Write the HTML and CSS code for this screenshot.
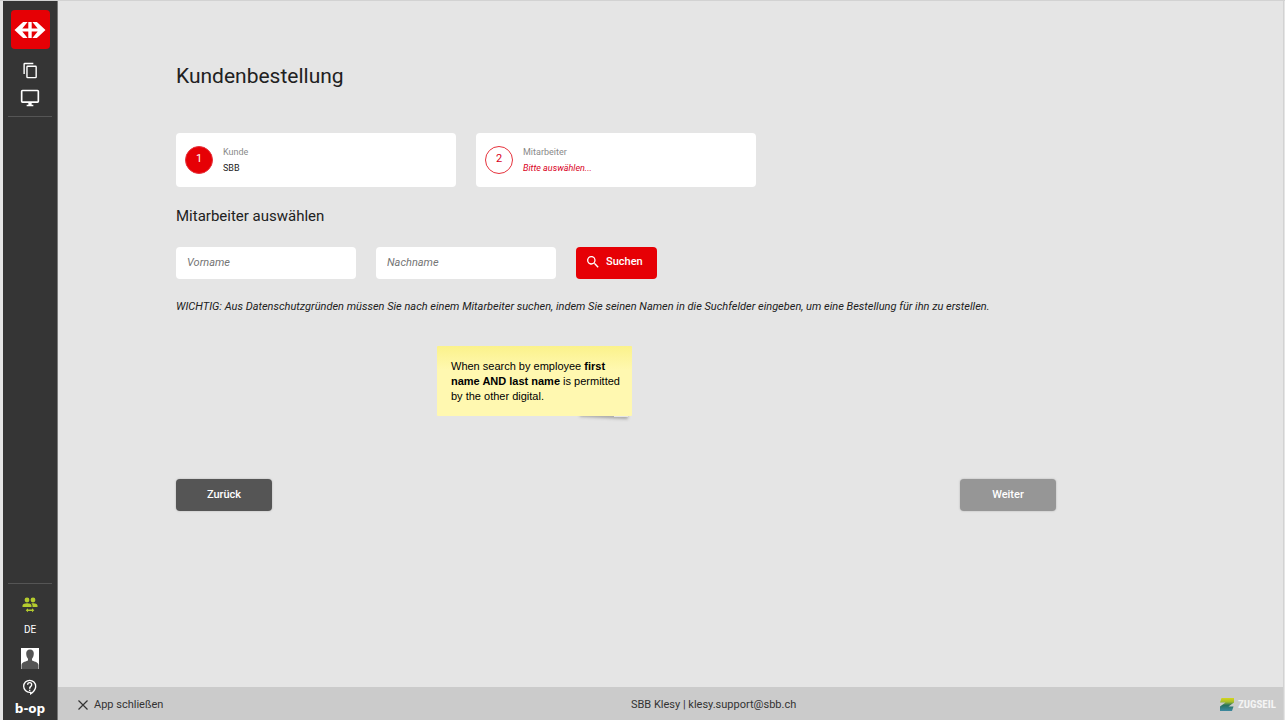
FILE: index.html
```html
<!DOCTYPE html>
<html lang="de">
<head>
<meta charset="utf-8">
<meta name="viewport" content="width=device-width, initial-scale=1">
<title>Kundenbestellung</title>
<link rel="stylesheet" href="styles.css">
</head>
<body>
<div class="app">
  <nav class="sidebar" aria-label="Navigation">
    <div class="side-group side-top">
      <a class="brand" href="#" aria-label="SBB">
        <svg width="32" height="16" viewBox="0 0 32 17" preserveAspectRatio="none" fill="#fff"><path d="M14.300 0h3.400v6.800h6L18.400 0h4.500L31.500 8.500l-8.600 8.500h-4.500l5.300-6.800h-6V17h-3.400v-6.800h-6L13.600 17H9.100L.5 8.500 9.100 0h4.500L8.300 6.800h6z"/></svg>
      </a>
      <button class="side-btn" type="button" aria-label="Kopien">
        <svg width="17" height="17" viewBox="0 0 24 24" fill="#fff"><path d="M16 1H4a2 2 0 0 0-2 2v14h2V3h12V1zm3 4H8a2 2 0 0 0-2 2v14a2 2 0 0 0 2 2h11a2 2 0 0 0 2-2V7a2 2 0 0 0-2-2zm0 16H8V7h11v14z"/></svg>
      </button>
      <button class="side-btn" type="button" aria-label="Bildschirm">
        <svg width="20" height="20" viewBox="0 0 24 24" fill="#fff"><path d="M21 2H3a2 2 0 0 0-2 2v12a2 2 0 0 0 2 2h7v2H8v2h8v-2h-2v-2h7a2 2 0 0 0 2-2V4a2 2 0 0 0-2-2zm0 14H3V4h18v12z"/></svg>
      </button>
    </div>
    <div class="side-group side-bottom">
      <button class="side-btn" type="button" aria-label="Benutzer wechseln">
        <svg width="16" height="16" viewBox="0 0 16 16" fill="#b5cc2e"><circle cx="5" cy="3" r="2.400"/><circle cx="11" cy="3" r="2.400"/><path d="M.5 10V8.600C.5 7 3.300 6.300 5 6.300s4.500.7 4.500 2.300V10zM10.500 10V8.600c0-1-.5-1.700-1.200-2.200.6-.1 1.200-.1 1.700-.1 1.700 0 4.500.7 4.500 2.300V10zM6 11.300v1.300h4v-1.300l2.300 2-2.300 2V14H6v1.300l-2.300-2z"/></svg>
      </button>
      <button class="side-btn lang" type="button">DE</button>
      <button class="side-btn avatar" type="button" aria-label="Profil">
        <svg width="18" height="21" viewBox="0 0 18 21"><path fill="#fff" d="M0 0h18v21H0z"/><path fill="#555" d="M9 1.500c2.600 0 3.900 1.800 3.800 4.200-.1 2.200-.8 4-1.800 5v1.600c.8 1.200 6.200 1.400 6.500 4.700V21H.5v-4c.3-3.300 5.700-3.500 6.500-4.700v-1.600c-1-1-1.700-2.800-1.800-5C5.100 3.300 6.400 1.500 9 1.500z"/></svg>
      </button>
      <button class="side-btn help" type="button" aria-label="Hilfe">
        <svg width="16" height="16" viewBox="0 0 24 24" fill="#fff"><path d="M11.500 1a10 10 0 0 0 0 20h.5v3c4.900-2.300 9.500-7 9.500-13A10 10 0 0 0 11.500 1zm2.500 19.300V19h-2.500a8 8 0 1 1 8-8c0 3.500-2.200 6.900-5.500 9.300zM10.500 16h2v2h-2zm1-11.500a4 4 0 0 0-4 4h2a2 2 0 0 1 4 0c0 2-3 1.800-3 6h2c0-2.700 3-3 3-6a4 4 0 0 0-4-4z"/></svg>
      </button>
      <span class="maker">b-op</span>
    </div>
  </nav>

  <div class="page">
    <main class="content">
      <h1 class="title">Kundenbestellung</h1>
      <ol class="steps">
        <li class="step">
          <span class="step-no step-no-done">1</span>
          <div class="step-text"><span class="step-label">Kunde</span><span class="step-value">SBB</span></div>
        </li>
        <li class="step">
          <span class="step-no">2</span>
          <div class="step-text"><span class="step-label">Mitarbeiter</span><span class="step-value step-open">Bitte auswählen...</span></div>
        </li>
      </ol>
      <h2 class="subtitle">Mitarbeiter auswählen</h2>
      <form class="search">
        <input class="field" type="text" placeholder="Vorname" aria-label="Vorname">
        <input class="field" type="text" placeholder="Nachname" aria-label="Nachname">
        <button class="btn btn-search" type="button">
          <svg width="16" height="16" viewBox="0 0 24 24" fill="#fff"><path d="M15.500 14h-.8l-.3-.3A6.500 6.500 0 1 0 13.700 14.400l.3.300v.8l5 5 1.500-1.500zm-6 0a4.500 4.500 0 1 1 0-9 4.500 4.500 0 0 1 0 9z"/></svg>
          Suchen
        </button>
      </form>
      <p class="hint">WICHTIG: Aus Datenschutzgründen müssen Sie nach einem Mitarbeiter suchen, indem Sie seinen Namen in die Suchfelder eingeben, um eine Bestellung für ihn zu erstellen.</p>
      <aside class="note">When search by employee <b>first</b><br><b>name AND last name</b> is permitted<br>by the other digital.</aside>
      <div class="actions">
        <button class="btn btn-back" type="button">Zurück</button>
        <button class="btn btn-next" type="button" disabled>Weiter</button>
      </div>
    </main>
    <footer class="footer">
      <button class="close" type="button">
        <svg width="10" height="10" viewBox="0 0 10 10" fill="none" stroke="#333" stroke-width="1.200"><path d="M.5.5l9 9M9.500.5l-9 9"/></svg>
        App schließen
      </button>
      <span class="contact">SBB Klesy | <a class="mail" href="mailto:klesy.support@sbb.ch">klesy.support@sbb.ch</a></span>
      <span class="vendor">
        <svg width="14" height="13" viewBox="0 0 14 13"><defs><linearGradient id="z" x1="0" y1="0" x2="0" y2="1"><stop offset="0" stop-color="#d5d51c"/><stop offset=".3" stop-color="#a5bd2c"/><stop offset=".55" stop-color="#28725f"/><stop offset="1" stop-color="#3c88a0"/></linearGradient></defs><path fill="url(#z)" d="M1.500 0H14v4.500L8.500 8.500h5L12 13H0V8.500l5.500-4H0z"/></svg>
        ZUGSEIL
      </span>
    </footer>
  </div>
</div>
</body>
</html>
```
FILE: styles.css
```css
* { box-sizing: border-box; }

body {
  margin: 0;
  background: #e5e5e5;
  color: #212121;
  font: 11px/16px Roboto, sans-serif;
}

button, input { font: inherit; color: inherit; }

button {
  border: 0;
  padding: 0;
  background: none;
}

.app {
  display: flex;
  min-height: 100vh;
  padding: 0 1px 0 3px;
  border-top: 1px solid #d2d2d2;
}

.sidebar {
  flex: none;
  display: flex;
  flex-direction: column;
  justify-content: space-between;
  width: 55px;
  padding: 9px 5px 5px;
  background: #353535;
  border-right: 1px solid #777;
}

.side-group {
  display: flex;
  flex-direction: column;
  align-items: center;
}

.side-top {
  padding-bottom: 4px;
  border-bottom: 1px solid #555;
}

.side-bottom {
  padding-top: 11px;
  border-top: 1px solid #555;
}

.side-btn {
  display: flex;
  align-items: center;
  justify-content: center;
  width: 32px;
  min-height: 20px;
}

.side-top .side-btn { height: 28px; }

.brand {
  display: flex;
  align-items: center;
  justify-content: center;
  width: 39px;
  height: 39px;
  margin-bottom: 7px;
  border-radius: 4px;
  background: #e60005;
}

.lang {
  height: 30px;
  color: #fff;
  font-size: 10px;
}

.avatar { height: 26px; }

.help { height: 32px; }

.maker {
  color: #fff;
  font: bold 12px/12px "DejaVu Sans", sans-serif;
}

.page {
  flex: 1;
  min-width: 0;
  display: flex;
  flex-direction: column;
  border-right: 1px solid #d2d2d2;
}

.content {
  flex: 1;
  width: 100%;
  max-width: 1116px;
  padding: 61px 118px 32px;
}

.title {
  margin: 0;
  font-size: 21px;
  line-height: 28px;
  font-weight: 400;
}

.steps {
  display: flex;
  gap: 20px;
  margin: 43px 0 0;
  padding: 0;
  list-style: none;
}

.step {
  display: flex;
  align-items: center;
  gap: 10px;
  flex: 0 1 280px;
  padding: 11px 9px;
  border-radius: 4px;
  background: #fff;
}

.step-no {
  flex: none;
  width: 28px;
  height: 28px;
  border: 1px solid #e6323c;
  border-radius: 50%;
  color: #d9001b;
  line-height: 24px;
  text-align: center;
}

.step-no-done {
  background: #e60005;
  color: #fff;
}

.step-text {
  display: flex;
  flex-direction: column;
  font-size: 9px;
}

.step-label { color: #8a8a8a; }

.step-open {
  color: #d9001b;
  font-style: italic;
}

.subtitle {
  margin: 19px 0 21px;
  font-size: 15px;
  line-height: 20px;
  font-weight: 400;
}

.search {
  display: flex;
  gap: 20px;
}

.field {
  flex: 0 1 180px;
  min-width: 0;
  height: 32px;
  padding: 0 11px 2px;
  border: 0;
  border-radius: 4px;
  background: #fff;
  font-style: italic;
}

.field::placeholder {
  color: #757575;
  opacity: 1;
}

.btn {
  height: 32px;
  padding-bottom: 1px;
  border-radius: 4px;
  color: #fff;
  font-weight: 500;
}

.btn-search {
  display: flex;
  align-items: center;
  gap: 5px;
  padding: 0 14px 2px 9px;
  background: #e60005;
}

.hint {
  margin: 20px 0 31px;
  font-style: italic;
}

.note {
  position: relative;
  width: 195px;
  margin-left: 261px;
  padding: 13px 10px 12px 14px;
  border-radius: 1px;
  background: linear-gradient(#fbf28b, #fff8b0 24px);
  color: #000;
  font: 11px/15px "Liberation Sans", sans-serif;
}

.note::after {
  content: "";
  position: absolute;
  z-index: -1;
  right: 4px;
  bottom: 0;
  width: 48px;
  height: 6px;
  box-shadow: 0 2px 3px #aaa;
  transform: rotate(3deg);
}

.actions {
  display: flex;
  justify-content: space-between;
  margin-top: 63px;
}

.btn-back, .btn-next {
  width: 96px;
  box-shadow: 0 0 2px #aaa;
}

.btn-back { background: #555; }
.btn-next { background: #969696; }

.footer {
  display: grid;
  grid-template-columns: 6fr 5fr 2fr;
  align-items: center;
  height: 33px;
  padding: 2px 7px 0 20px;
  background: #cbcbcb;
  color: #333;
}

.close {
  display: flex;
  align-items: center;
  justify-self: start;
  gap: 6px;
}

.mail {
  color: inherit;
  text-decoration: none;
}

.vendor {
  display: flex;
  align-items: center;
  justify-self: end;
  gap: 4px;
  color: #f4f4f4;
  font: bold 11px/16px "Roboto Condensed", "Liberation Sans Narrow", Roboto, sans-serif;
}
```
